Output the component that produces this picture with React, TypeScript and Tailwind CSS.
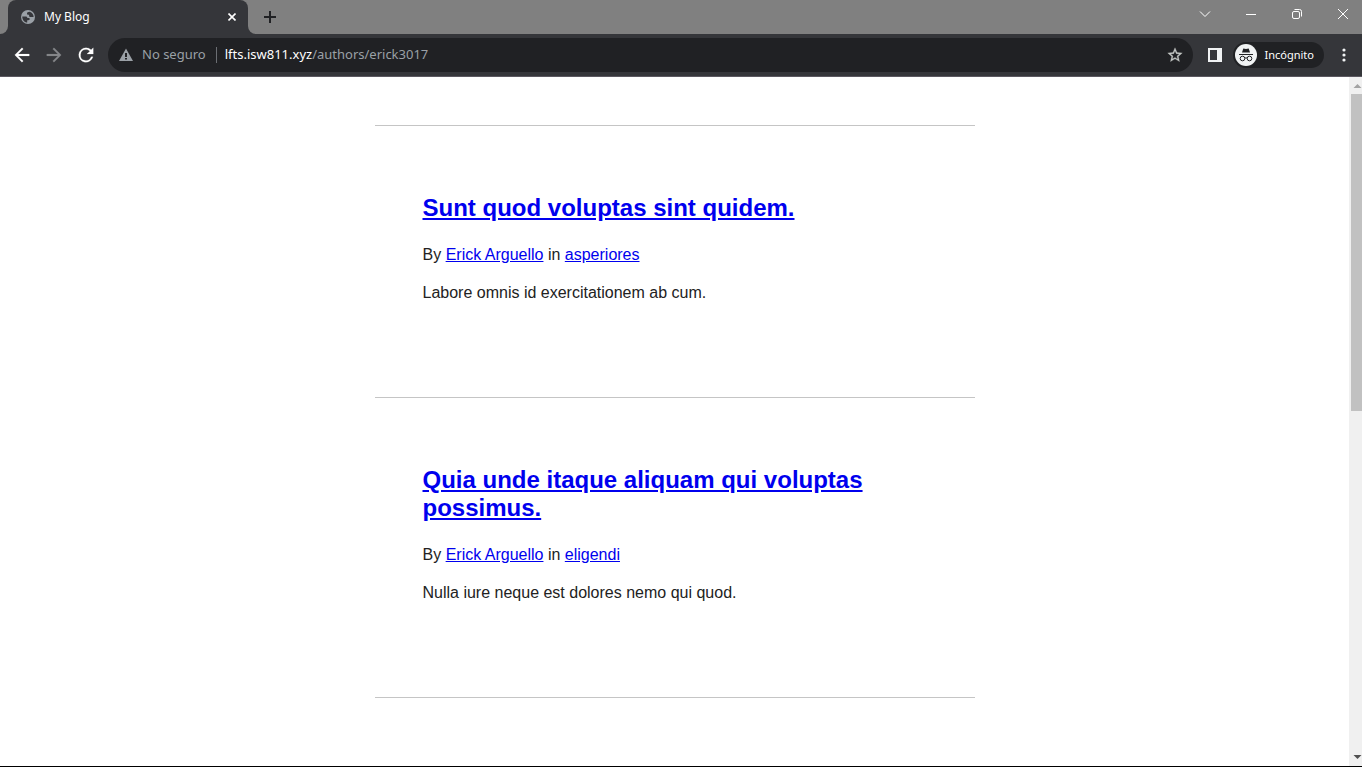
import React from "react";

type Post = { title: string; author: string; category: string; excerpt: string };

const posts: Post[] = [
  {
    title: "Sunt quod voluptas sint quidem.",
    author: "Erick Arguello",
    category: "asperiores",
    excerpt: "Labore omnis id exercitationem ab cum.",
  },
  {
    title: "Quia unde itaque aliquam qui voluptas possimus.",
    author: "Erick Arguello",
    category: "eligendi",
    excerpt: "Nulla iure neque est dolores nemo qui quod.",
  },
];

function TabStrip() {
  return (
    <div className="flex h-[34px] shrink-0">
      <div className="w-2 shrink-0 rounded-br-lg bg-[#808080]" />
      <div className="w-60 shrink-0 bg-[#808080]">
        <div className="flex h-full items-center rounded-t-lg bg-[#35363a] pr-2 pl-3">
          <svg viewBox="0 0 16 16" className="size-4 shrink-0" aria-hidden="true">
            <circle cx="8" cy="8" r="7" fill="#9aa0a6" />
            <path
              d="M2.300 7.500h3.400c1 0 1.700.7 1.700 1.500h1.300c.7 0 1 .5 1 1.100 0 .8-.6 1.200-1.300 1.200H7.200v2.300C4.300 13.300 2.200 10.800 2.300 7.500zM9.600 2.700C8 2.800 7 3.400 7 4.500c0 .8.500 1.300 1.300 1.300h.8v1c0 .8.600 1.300 1.400 1.300h3.100c.1-2.600-1.600-4.800-4-5.400z"
              fill="#35363a"
            />
          </svg>
          <span className="ml-2 flex-1 text-xs text-white">My Blog</span>
          <button aria-label="Cerrar pestaña" className="flex size-4 items-center justify-center text-white">
            <svg viewBox="0 0 8 8" className="size-2" stroke="currentColor" strokeWidth="1.6">
              <path d="M.5.5l7 7M7.500.5l-7 7" />
            </svg>
          </button>
        </div>
      </div>
      <div className="flex min-w-0 flex-1 justify-between rounded-bl-lg bg-[#808080]">
        <button aria-label="Nueva pestaña" className="ml-2 flex h-[34px] w-7 items-center justify-center">
          <svg viewBox="0 0 12 12" className="size-3" stroke="#202124" strokeWidth="2">
            <path d="M6 0v12M0 6h12" />
          </svg>
        </button>
        <div className="-mr-1 flex h-7 text-white">
          <button aria-label="Buscar pestañas" className="flex w-[46px] items-center justify-center">
            <svg viewBox="0 0 12 12" className="size-3" fill="none" stroke="currentColor">
              <path d="M1 3.500l5 5 5-5" />
            </svg>
          </button>
          <button aria-label="Minimizar" className="flex w-[46px] items-center justify-center">
            <svg viewBox="0 0 10 10" className="size-2.5" fill="none" stroke="currentColor">
              <path d="M0 5.500h10" />
            </svg>
          </button>
          <button aria-label="Restaurar" className="flex w-[46px] items-center justify-center">
            <svg viewBox="0 0 10 10" className="size-2.5" fill="none" stroke="currentColor">
              <rect x=".5" y="2.500" width="7" height="7" rx="1.500" />
              <path d="M2.500.5h5a2 2 0 0 1 2 2v5" />
            </svg>
          </button>
          <button aria-label="Cerrar" className="flex w-[46px] items-center justify-center">
            <svg viewBox="0 0 10 10" className="size-2.5" fill="none" stroke="currentColor">
              <path d="M0 0l10 10M10 0L0 10" />
            </svg>
          </button>
        </div>
      </div>
    </div>
  );
}

function Toolbar() {
  return (
    <div className="flex h-[43px] shrink-0 items-center border-b border-[#5b5860] pr-2.5 pl-3">
      <div className="flex shrink-0 gap-3">
        <button aria-label="Atrás" className="text-white">
          <svg viewBox="1 1 22 22" className="size-5" fill="currentColor" stroke="currentColor" strokeWidth=".2">
            <path d="M20 11H7.830l5.590-5.590L12 4l-8 8 8 8 1.410-1.410L7.830 13H20z" />
          </svg>
        </button>
        <button aria-label="Adelante" className="text-[#85868a]">
          <svg viewBox="1 1 22 22" className="size-5" fill="currentColor" stroke="currentColor" strokeWidth=".2">
            <path d="M12 4l-1.410 1.410L16.170 11H4v2h12.170l-5.580 5.590L12 20l8-8z" />
          </svg>
        </button>
        <button aria-label="Volver a cargar" className="text-white">
          <svg viewBox="1 1 22 22" className="size-5" fill="currentColor" stroke="currentColor" strokeWidth=".2">
            <path d="M17.650 6.350A7.960 7.960 0 0 0 12 4a8 8 0 1 0 7.730 10h-2.080A6 6 0 1 1 12 6c1.660 0 3.140.69 4.220 1.780L13 11h7V4z" />
          </svg>
        </button>
      </div>
      <div className="ml-3 flex h-[34px] min-w-0 flex-1 items-center rounded-full bg-[#202124] px-2.5 text-[13px]">
        <svg viewBox="0 0 16 16" className="size-4 shrink-0" aria-hidden="true">
          <path d="M8 1.500L15 14H1z" fill="#9aa0a6" />
          <path d="M7 6h2v4H7zM7 11h2v1.500H7z" fill="#202124" />
        </svg>
        <span className="ml-2 whitespace-nowrap text-[#9aa0a6]">No seguro</span>
        <span className="mr-2 ml-2.5 h-4 w-px bg-[#6b6e73]" />
        <a href="#url" className="flex-1 whitespace-nowrap text-[#9aa0a6]">
          <span className="text-white">lfts.isw811.xyz</span>/authors/erick3017
        </a>
        <button aria-label="Añadir a marcadores" className="text-[#c4c7c5]">
          <svg viewBox="1 1 22 22" className="size-4" fill="currentColor" stroke="currentColor" strokeWidth=".4">
            <path d="M22 9.240l-7.190-.62L12 2 9.190 8.630 2 9.240l5.460 4.730L5.820 21 12 17.270 18.180 21l-1.630-7.030zM12 15.400l-3.760 2.270 1-4.280-3.320-2.880 4.380-.38L12 6.100l1.710 4.040 4.380.38-3.320 2.880 1 4.280z" />
          </svg>
        </button>
      </div>
      <button aria-label="Panel lateral" className="ml-3.5 shrink-0">
        <svg viewBox="0 0 16 16" className="size-4">
          <path fillRule="evenodd" d="M1 1h14v14H1zM3 3v10h7V3z" fill="#f1f3f4" />
        </svg>
      </button>
      <button className="ml-2.5 flex h-[26px] shrink-0 items-center rounded-full bg-[#202124] pr-2.5 pl-0.5 text-[11px] text-white">
        <svg viewBox="0 0 22 22" className="size-[22px]" aria-hidden="true">
          <circle cx="11" cy="11" r="11" fill="#f1f3f4" />
          <path d="M8.300 4.500l2.700.5 2.700-.5L15 8.500H7z" fill="#202124" />
          <path d="M4 10.500h14" stroke="#202124" strokeWidth="1" />
          <g fill="none" stroke="#202124" strokeWidth="1">
            <circle cx="7.500" cy="14.500" r="2.300" />
            <circle cx="14.500" cy="14.500" r="2.300" />
            <path d="M9.800 14.200q1.200-.8 2.400 0" />
          </g>
        </svg>
        <span className="ml-2">Incógnito</span>
      </button>
      <button aria-label="Más opciones" className="ml-3 shrink-0">
        <svg viewBox="0 0 16 16" className="size-4" fill="#f1f3f4">
          <circle cx="8" cy="3" r="1.600" />
          <circle cx="8" cy="8" r="1.600" />
          <circle cx="8" cy="13" r="1.600" />
        </svg>
      </button>
    </div>
  );
}

function Article({ post }: { post: Post }) {
  return (
    <article className="border-t border-[#c5c5c5] px-12 pt-[68px] pb-[92px]">
      <h2 className="text-2xl leading-7 font-bold">
        <a href="#post" className="text-[#0000ee] underline">
          {post.title}
        </a>
      </h2>
      <p className="mt-[21px] leading-6">
        By{" "}
        <a href="#author" className="text-[#0000ee] underline">
          {post.author}
        </a>{" "}
        in{" "}
        <a href="#category" className="text-[#0000ee] underline">
          {post.category}
        </a>
      </p>
      <p className="mt-3.5 leading-6">{post.excerpt}</p>
    </article>
  );
}

function Scrollbar() {
  return (
    <div className="flex w-[13px] shrink-0 flex-col items-end bg-[#f0f0f0]" aria-hidden="true">
      <svg viewBox="0 0 11 17" className="h-[17px] w-[11px] shrink-0">
        <path d="M2.500 11L6.500 7l4 4z" fill="#a3a3a3" />
      </svg>
      <div className="h-[46%] w-[11px] bg-[#c1c1c1]" />
      <div className="flex-1" />
      <svg viewBox="0 0 11 17" className="h-[17px] w-[11px] shrink-0">
        <path d="M2.500 6l4 4 4-4z" fill="#505050" />
      </svg>
    </div>
  );
}

export default function App() {
  return (
    <div className="flex h-screen flex-col overflow-hidden border-b border-black bg-white">
      <header className="shrink-0 bg-[#35363a] font-['Noto_Sans',sans-serif]">
        <TabStrip />
        <Toolbar />
      </header>
      <div className="flex min-h-0 flex-1">
        <main className="min-w-0 flex-1 overflow-hidden pt-12 font-['Liberation_Sans',Arial,sans-serif] text-base text-[#222222]">
          <div className="mx-auto max-w-[600px]">
            {posts.map((post) => (
              <Article key={post.title} post={post} />
            ))}
            <hr className="border-[#c5c5c5]" />
          </div>
        </main>
        <Scrollbar />
      </div>
    </div>
  );
}
